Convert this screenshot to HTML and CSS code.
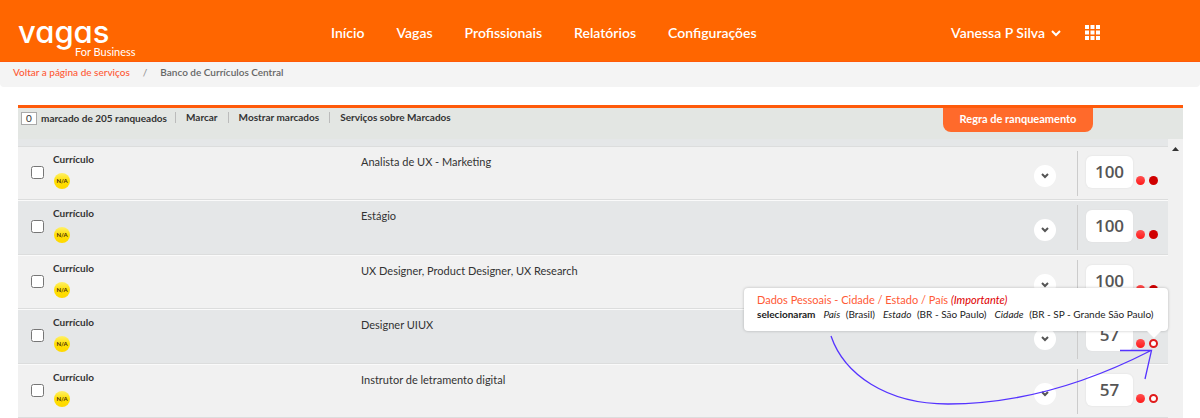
FILE: index.html
```html
<!DOCTYPE html>
<html lang="pt-BR">
<head>
    <meta charset="UTF-8">
    <meta name="viewport" content="width=device-width, initial-scale=1.0">
    <title>Banco de Currículos Central</title>
    <link rel="stylesheet" href="styles.css">
</head>
<body>
    <header class="header">
        <a class="logo" href="#">
            <span class="logo-name">vagas</span>
            <span class="logo-sub">For Business</span>
        </a>
        <nav class="nav">
            <a href="#">Início</a>
            <a href="#">Vagas</a>
            <a href="#">Profissionais</a>
            <a href="#">Relatórios</a>
            <a href="#">Configurações</a>
        </nav>
        <button class="user" type="button">
            Vanessa P Silva
            <svg width="10" height="8" viewBox="0 0 10 8"><path d="M1 2l4 4 4-4" fill="none" stroke="#fff" stroke-width="2"/></svg>
        </button>
        <button class="apps" type="button" aria-label="Aplicativos">
            <svg width="15" height="15" viewBox="0 0 15 15" fill="#fff">
                <path d="M0 0h4v4H0zM5.5 0h4v4h-4zM11 0h4v4h-4zM0 5.500h4v4H0zM5.500 5.500h4v4h-4zM11 5.500h4v4h-4zM0 11h4v4H0zM5.500 11h4v4h-4zM11 11h4v4h-4z"/>
            </svg>
        </button>
    </header>

    <div class="breadcrumb">
        <a href="#">Voltar a página de serviços</a>
        <span class="slash">/</span>
        <span>Banco de Currículos Central</span>
    </div>

    <main class="panel">
        <div class="toolbar">
            <div class="marked">
                <input type="text" id="marked" value="0">
                <label for="marked">marcado de 205 ranqueados</label>
            </div>
            <a href="#">Marcar</a>
            <a href="#">Mostrar marcados</a>
            <a href="#">Serviços sobre Marcados</a>
            <button class="rule" type="button">Regra de ranqueamento</button>
        </div>

        <div class="list-wrap">
            <ul class="list">
                <li class="row">
                    <input type="checkbox" aria-label="Marcar currículo 1">
                    <div class="cv"><a href="#">Currículo</a><span class="badge">N/A</span></div>
                    <div class="title">Analista de UX - Marketing</div>
                    <button class="more" type="button" aria-label="Detalhes"><svg width="8" height="6" viewBox="0 0 8 6"><path d="M1 1l3 3 3-3"/></svg></button>
                    <div class="rank">
                        <span class="score">100</span>
                        <span class="dots"><i class="dot"></i><i class="dot dark"></i></span>
                    </div>
                </li>
                <li class="row">
                    <input type="checkbox" aria-label="Marcar currículo 2">
                    <div class="cv"><a href="#">Currículo</a><span class="badge">N/A</span></div>
                    <div class="title">Estágio</div>
                    <button class="more" type="button" aria-label="Detalhes"><svg width="8" height="6" viewBox="0 0 8 6"><path d="M1 1l3 3 3-3"/></svg></button>
                    <div class="rank">
                        <span class="score">100</span>
                        <span class="dots"><i class="dot"></i><i class="dot dark"></i></span>
                    </div>
                </li>
                <li class="row">
                    <input type="checkbox" aria-label="Marcar currículo 3">
                    <div class="cv"><a href="#">Currículo</a><span class="badge">N/A</span></div>
                    <div class="title">UX Designer, Product Designer, UX Research</div>
                    <button class="more" type="button" aria-label="Detalhes"><svg width="8" height="6" viewBox="0 0 8 6"><path d="M1 1l3 3 3-3"/></svg></button>
                    <div class="rank">
                        <span class="score">100</span>
                        <span class="dots"><i class="dot"></i><i class="dot dark"></i></span>
                    </div>
                </li>
                <li class="row">
                    <input type="checkbox" aria-label="Marcar currículo 4">
                    <div class="cv"><a href="#">Currículo</a><span class="badge">N/A</span></div>
                    <div class="title">Designer UIUX</div>
                    <button class="more" type="button" aria-label="Detalhes"><svg width="8" height="6" viewBox="0 0 8 6"><path d="M1 1l3 3 3-3"/></svg></button>
                    <div class="rank">
                        <span class="score">57</span>
                        <span class="dots">
                            <i class="dot"></i><i class="dot empty"></i>
                            <div class="tooltip" role="tooltip">
                                <p class="tip-title">Dados Pessoais - Cidade / Estado / País <em>(Importante)</em></p>
                                <p class="tip-text"><b>selecionaram</b> <span><em>País</em> (Brasil)</span> <span><em>Estado</em> (BR - São Paulo)</span> <span><em>Cidade</em> (BR - SP - Grande São Paulo)</span></p>
                            </div>
                            <svg class="arrow" width="340" height="80" viewBox="0 0 340 80">
                                <path d="M11 6C24 44 66 74 128 74C210 74 281 46 330 21M300 20.500H331.500L325 49"/>
                            </svg>
                        </span>
                    </div>
                </li>
                <li class="row">
                    <input type="checkbox" aria-label="Marcar currículo 5">
                    <div class="cv"><a href="#">Currículo</a><span class="badge">N/A</span></div>
                    <div class="title">Instrutor de letramento digital</div>
                    <button class="more" type="button" aria-label="Detalhes"><svg width="8" height="6" viewBox="0 0 8 6"><path d="M1 1l3 3 3-3"/></svg></button>
                    <div class="rank">
                        <span class="score">57</span>
                        <span class="dots"><i class="dot"></i><i class="dot empty"></i></span>
                    </div>
                </li>
            </ul>
            <div class="scroll">
                <svg width="7" height="4" viewBox="0 0 7 4"><path d="M0 4l3.500-4L7 4z" fill="#333"/></svg>
            </div>
        </div>
    </main>
</body>
</html>
```

FILE: styles.css
```css
* {
    box-sizing: border-box;
}
body {
    margin: 0;
    background: #fff;
    color: #333;
    font-family: Lato, sans-serif;
    font-size: 10px;
    line-height: 14px;
}
a {
    color: inherit;
    text-decoration: none;
}
button {
    border: none;
    padding: 0;
    background: none;
    font-family: inherit;
    cursor: pointer;
}
p {
    margin: 0;
}

/* header */
.header {
    display: flex;
    align-items: center;
    height: 62px;
    padding: 4px 100px 0 18px;
    background: #ff6600;
    border-bottom: 1px solid #ff5a0a;
    color: #fff;
}
.logo {
    display: flex;
    flex-direction: column;
    width: 313px;
    padding-top: 8px;
}
.logo-name {
    font-family: Inter, sans-serif;
    font-feature-settings: "cv11";
    font-size: 31px;
    font-weight: 500;
    line-height: 30px;
}
.logo-sub {
    padding-left: 57px;
    font-size: 11px;
    line-height: 10px;
}
.nav {
    display: flex;
    gap: 32px;
    flex: 1;
    font-size: 14px;
    font-weight: 600;
    line-height: 18px;
}
.user {
    display: flex;
    align-items: center;
    gap: 6px;
    margin-right: 24px;
    color: #fff;
    font-size: 14px;
    font-weight: 600;
    line-height: 18px;
}
.apps {
    display: flex;
}

/* breadcrumb */
.breadcrumb {
    display: flex;
    gap: 13px;
    padding: 3px 13px 8px;
    background: #f4f4f4;
    border-radius: 0 0 4px 4px;
    color: #666;
    font-weight: 600;
}
.breadcrumb a {
    color: #ff5a36;
    font-weight: 500;
}
.breadcrumb .slash {
    color: #999;
}

/* panel */
.panel {
    margin: 18px 17px 0 18px;
    border-top: 3px solid #ff5a0a;
}
.toolbar {
    display: flex;
    align-items: flex-start;
    height: 31px;
    padding-left: 3px;
    background: #e3e6e3;
    font-weight: 700;
}
.toolbar > a {
    margin-top: 4px;
    padding: 0 10px;
    line-height: 11px;
    border-left: 1px solid #bbb;
}
.marked {
    display: flex;
    align-items: center;
    gap: 4px;
    margin: 3px 8px 0 0;
}
.marked input {
    width: 16px;
    height: 13px;
    padding: 0;
    border: 1px solid #aaa;
    background: #fff;
    color: #333;
    font-family: inherit;
    font-size: 10px;
    text-align: center;
}
.rule {
    width: 150px;
    height: 24px;
    margin: 0 90px 0 auto;
    padding-bottom: 4px;
    border-radius: 0 0 8px 8px;
    background: #ff6a2b;
    color: #fff;
    font-size: 11px;
    font-weight: 700;
}

/* list */
.list-wrap {
    display: flex;
    background: #e5e7e8;
}
.list {
    flex: 1;
    margin: 0;
    padding: 7px 0 0;
    list-style: none;
}
.row {
    display: grid;
    grid-template-columns: 35px 308px 1fr 44px 91px;
    align-items: start;
    height: 54px;
    border-top: 1px solid #fafafa;
    border-bottom: 1px solid #dcdddd;
    background: #f1f1f1;
}
.row:first-child {
    border-top-color: #dcdddd;
}
.row:nth-child(even) {
    height: 55px;
    background: #e5e7e8;
}
.row input {
    width: 13px;
    height: 13px;
    margin: 19px 0 0 13px;
}
.cv {
    padding-top: 5px;
    font-weight: 700;
}
.cv a {
    display: block;
}
.badge {
    display: block;
    width: 16px;
    height: 16px;
    margin: 7px 0 0 1px;
    border-radius: 50%;
    background: linear-gradient(#fff06a, #ffe000 50%, #ffd800);
    color: #4a2a10;
    font-size: 6px;
    font-weight: 700;
    line-height: 16px;
    text-align: center;
}
.title {
    padding-top: 8px;
    font-size: 11px;
}
.more {
    display: flex;
    align-items: center;
    justify-content: center;
    width: 22px;
    height: 22px;
    margin: 18px 0 0 1px;
    border-radius: 50%;
    background: #fff;
}
.more path {
    fill: none;
    stroke: #555;
    stroke-width: 2;
}
.rank {
    display: flex;
    gap: 3px;
    height: 45px;
    margin-top: 4px;
    padding: 5px 0 0 8px;
    border-left: 1px solid #ccc;
}
.score {
    width: 47px;
    height: 32px;
    border-radius: 6px;
    background: #fff;
    box-shadow: 0 0 2px #ddd;
    color: #555;
    font-family: "Open Sans", sans-serif;
    font-size: 17px;
    font-weight: 600;
    line-height: 31px;
    text-align: center;
}
.dots {
    position: relative;
    display: flex;
    gap: 4px;
    height: 9px;
    margin-top: 20px;
}
.dot {
    width: 9px;
    height: 9px;
    border-radius: 50%;
    background: linear-gradient(#ff5050, #ff1a1a);
}
.dot.dark {
    background: #d00000;
}
.dot.empty {
    border: 2px solid #e01b1b;
    background: #fff;
}

/* tooltip */
.tooltip {
    position: absolute;
    right: -10px;
    bottom: 17px;
    z-index: 1;
    width: 424px;
    height: 43px;
    padding: 5px 13px;
    border-radius: 4px;
    background: #fff;
    box-shadow: 0 0 3px rgba(0, 0, 0, 0.25);
    color: #222;
    white-space: nowrap;
}
.tooltip::after {
    content: "";
    position: absolute;
    right: 7px;
    top: 100%;
    border: 7px solid transparent;
    border-top-color: #fff;
    border-bottom: none;
}
.tip-title {
    color: #ff5a36;
    font-size: 11px;
}
.tip-title em {
    color: #e00000;
}
.tip-text {
    display: flex;
    gap: 8px;
    font-size: 10px;
}
.tip-text em {
    margin-right: 3px;
}
.arrow {
    position: absolute;
    right: -2px;
    top: -9px;
    z-index: 2;
    fill: none;
    stroke: #5533ff;
    stroke-width: 1.3;
    pointer-events: none;
}

/* scrollbar */
.scroll {
    width: 15px;
    padding-top: 6px;
    background: #f1f1f1;
    text-align: center;
    line-height: 4px;
}
```
